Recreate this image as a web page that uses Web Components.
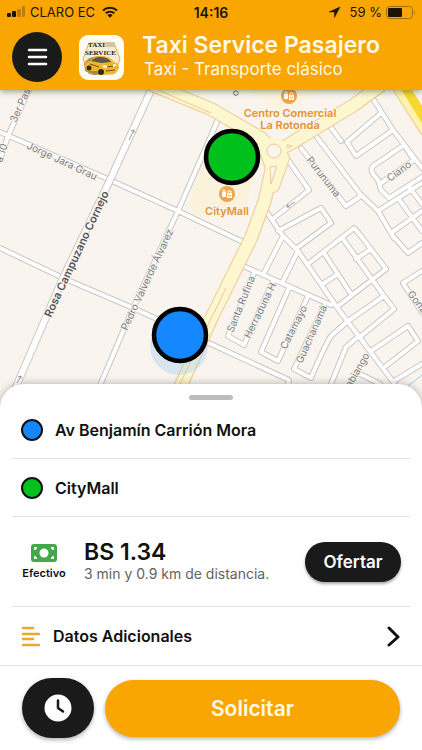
<!DOCTYPE html>
<html lang="es">
<head>
<meta charset="utf-8">
<meta name="viewport" content="width=device-width, initial-scale=1">
<title>Taxi Service Pasajero</title>
<style>
    body { margin: 0; font-family: Inter, "Liberation Sans", sans-serif; color: #111; }
</style>
</head>
<body>

<template id="app-template">
    <style>
        :host { display: flex; flex-direction: column; height: 100vh; background: #fff; --brand: #f9a602; --dark: #1a1a1a; }
        header { position: relative; z-index: 1; background: var(--brand); box-shadow: 0 2px 6px rgba(0,0,0,.35); }
        street-map { flex: 1; min-height: 200px; }
    </style>
    <header>
        <status-bar></status-bar>
        <title-bar>
            <span slot="title">Taxi Service Pasajero</span>
            <span slot="subtitle">Taxi - Transporte clásico</span>
        </title-bar>
    </header>
    <street-map></street-map>
    <trip-sheet>
        <stop-row style="--dot: #1688ff">Av Benjamín Carrión Mora</stop-row>
        <stop-row style="--dot: #00c01c">CityMall</stop-row>
        <fare-row>
            <span slot="payment">Efectivo</span>
            <span slot="price">BS 1.34</span>
            <span slot="detail">3 min y 0.9 km de distancia.</span>
            <span slot="action">Ofertar</span>
        </fare-row>
        <extra-row>Datos Adicionales</extra-row>
    </trip-sheet>
    <request-bar>Solicitar</request-bar>
</template>

<template id="status-template">
    <style>
        :host { display: grid; grid-template-columns: 1fr auto 1fr; align-items: center; height: 24px; padding: 0 6px; font-size: 13px; color: #1d1400; }
        div { display: flex; align-items: center; gap: 4px; }
        .right { justify-content: flex-end; }
        b { font-size: 14px; font-weight: 600; }
        svg { display: block; }
    </style>
    <div>
        <svg width="20" height="12" viewBox="0 0 20 12">
            <g fill="#1d1400"><rect x="1" y="7" width="4" height="4" rx="1"/><rect x="6" y="5" width="4" height="6" rx="1"/></g>
            <g fill="#bd7d05"><rect x="11" y="3" width="4" height="8" rx="1"/><rect x="16" y="0" width="3" height="11" rx="1"/></g>
        </svg>
        <span>CLARO EC</span>
        <svg width="22" height="12" viewBox="0 0 22 12" fill="none" stroke="#1d1400" stroke-width="2">
            <path d="M4 4.600a10.300 10.300 0 0 1 14 0M6.700 7.300a6.400 6.400 0 0 1 8.600 0"/>
            <path d="M11 11.800 8.500 9.300a3.600 3.600 0 0 1 5 0z" fill="#1d1400" stroke="none"/>
        </svg>
    </div>
    <b>14:16</b>
    <div class="right">
        <svg width="18" height="12" viewBox="0 0 18 12"><path d="M12 1 1 6h5.500v5.500z" fill="#1d1400" stroke="#1d1400" stroke-linejoin="round" stroke-width=".5"/></svg>
        <span>59 %</span>
        <svg width="30" height="13" viewBox="0 0 30 13">
            <rect x="0.500" y="0.500" width="26" height="12" rx="3" fill="none" stroke="#a36d06"/>
            <rect x="2" y="2" width="14" height="9" rx="1" fill="#1d1400"/>
            <path d="M28 4.500q2 2 0 4z" fill="#a36d06"/>
        </svg>
    </div>
</template>

<template id="title-template">
    <style>
        :host { display: flex; align-items: center; height: 66px; padding: 0 12px; color: #fff9e6; }
        button { display: grid; place-items: center; width: 50px; height: 50px; padding: 0; border: 0; border-radius: 50%; background: var(--dark); }
        .logo { margin: 0 18px 0 17px; border-radius: 9px; background: #fbfaf6; }
        h1, p { margin: 0; font-weight: 400; white-space: nowrap; }
        h1 { font-size: 23px; line-height: 24px; font-weight: 600; }
        p { padding-left: 2px; font-size: 17px; line-height: 24px; }
    </style>
    <button aria-label="Menú">
        <svg width="22" height="20" viewBox="0 0 22 20" stroke="#fff" stroke-width="2.500" stroke-linecap="round"><path d="M3 3h17M3 10h17M3 17h17"/></svg>
    </button>
    <svg class="logo" width="45" height="45" viewBox="0 0 45 45">
        <path d="M10 8h25l6 16-6 15H10L4 24z" fill="#f5edd2" stroke="#d8b34f"/>
        <path d="M27 7h8l2 5H26z" fill="#d7c49b"/>
        <path d="M5 29q3-7 14-8l8 1 9 6-2 10-19 2-9-4z" fill="#a58a49"/>
        <path d="M6 28q2-2 5-2 4-5 11-5 9 0 13 6 5 1 5 6l-3 5-14 2-5-4H8q-3-3-2-8z" fill="#f0b629"/>
        <path d="M12 26q4-4 9-4 8 0 11 5l-9 1z" fill="#585754"/>
        <path d="M20 22l-1 5M11 29l9 3M26 32l11-1M27 36l9-1" stroke="#71500c"/>
        <circle cx="10" cy="33" r="2.500" fill="#302b22"/><circle cx="22" cy="37" r="3" fill="#302b22"/>
        <path d="m24 31 4 1m6-1 3-1" stroke="#fff" stroke-width="2"/>
        <g font-family="Liberation Serif, serif" font-weight="700" fill="#252525">
            <text x="9" y="12" font-size="7">TAXI</text>
            <text x="6" y="20" font-size="7">SERVICE</text>
        </g>
    </svg>
    <div>
        <h1><slot name="title"></slot></h1>
        <p><slot name="subtitle"></slot></p>
    </div>
</template>

<template id="map-template">
    <style>
        :host { display: grid; grid-template-rows: minmax(0, 1fr); background: #f9f5ee; overflow: hidden; }
        svg { display: block; width: 100%; height: 100%; min-height: 0; }
        .edge, .road { fill: none; stroke-linejoin: round; stroke-linecap: round; }
        .edge { stroke: #c9c7c5; stroke-width: 6; }
        .road { stroke: #fff; stroke-width: 4; }
        .wide.edge { stroke-width: 8; }
        .wide.road { stroke-width: 6; }
        .main.edge { stroke: #f2c793; stroke-width: 14; }
        .main.road { stroke: #fdf7cf; stroke-width: 12; }
        text { font-size: 10px; fill: #7d7e85; stroke: #f9f5ee; stroke-width: 2; paint-order: stroke; stroke-linejoin: round; }
        .strong { font-size: 11px; font-weight: 600; fill: #55565c; }
        .poi { font-size: 11px; font-weight: 600; fill: #e6922e; text-anchor: middle; }
    </style>
    <svg viewBox="0 90 422 319" preserveAspectRatio="xMidYMin slice">
        <defs>
            <path id="streets" d="M0 132 110 180 178 211 243 242M30 88 8 136 0 160M221 112 211 136 178 211 133 308 98 390
                M0 248 63 278 133 308 211 344 289 380 287 390M241 265 331 305
                M368 91 393 130 422 168M381 113 347 142 356 156 393 130M329 125 341 141M316 136 361 195 378 211 394 238
                M301 148 346 206 361 196M404 145 373 166Q370 169 373 174L378 180 381 190 389 198 422 177M404 145 414 160 381 183
                M378 211 422 183M391 233 422 211M398 198 422 231M410 188 422 204
                M288 160 309 190 274 218M278 231 321 208 331 223 297 248
                M266 211 283 236 298 251 336 306 394 383 400 392M283 236 264 273M298 251 283 281
                M308 264 354 228 361 236M324 253 351 294M324 283 338 274
                M343 239 384 296 394 309 361 336M356 259 371 249M361 236 386 269 338 306M348 321 384 296
                M393 236 408 253 422 243M422 271 403 283 422 312M371 351 408 326 418 341 386 366M394 381 422 364
                M348 321 331 336Q325 345 311 378L294 369 324 306M359 336 346 347 331 384 329 390
                M254 273 228 336 244 345 273 281M289 288 261 352 278 361 308 296M356 372 380 384"/>
            <path id="avenue" d="M152 88 110 180 63 278 12 396"/>
            <path id="main" d="M150 84 211 109 261 138 274 151 288 145 354 105 380 86M264 145 272 168 265 200 251 238 211 319 178 392M283 158 273 186"/>
            <g id="mall">
                <circle r="8" fill="#efa54c"/>
                <path d="M-5-2h4v5h-4zM0-1h5v5H0z" fill="#fff"/>
                <path d="M-4-2v-2h2v2M1-1v-2h3v2" fill="none" stroke="#fff"/>
                <path d="M1 1q1.500 2 3 0" fill="none" stroke="#efa54c"/>
            </g>
        </defs>

        <path d="m207 143-19 64 12 10 44-2 14-55-28-22z" fill="#fbf2db"/>
        <path d="m245 88 80 0-42 26z" fill="#fcf4df"/>

        <use href="#streets" class="edge"/>
        <use href="#streets" class="road"/>
        <use href="#avenue" class="wide edge"/>
        <use href="#avenue" class="wide road"/>
        <use href="#main" class="main edge"/>
        <use href="#main" class="main road"/>
        <circle cx="274" cy="151" r="13" fill="#fdf7cf"/>
        <circle cx="274" cy="151" r="7" fill="#f9f5ee" stroke="#f2c793"/>
        <path d="m270 167 7-1-6 18z" fill="#f9f5ee" stroke="#f2c793"/>
        <path d="m287 145 5 1-4 2zM226 288l-19 39-27 57M158 90l53 23" fill="none" stroke="#f2c793"/>
        <path d="m397 82 31 49" stroke="#f2c793" stroke-width="16"/>
        <path d="m397 82 31 49" stroke="#fdf3ad" stroke-width="14"/>
        <path d="m402 82 27 44" stroke="#f7d730" stroke-width="9"/>
        <path d="m403 390 19-15" stroke="#8cd4e6"/>
        <path d="m129 140 5-10m-3 1 3-1v3M17 383l4-7m-3 1 3-1v3M287 207l8-5m-8 5 1-3m-1 3h3" fill="none" stroke="#9b9b9b"/>

        <text transform="translate(16 123) rotate(-66)">3er Pasaje</text>
        <text transform="translate(2 163) rotate(-72)">a 10</text>
        <text transform="translate(26 148) rotate(25)">Jorge Jara Grau</text>
        <text transform="translate(51 318) rotate(-65)" class="strong">Rosa Campuzano Cornejo</text>
        <text transform="translate(127 331) rotate(-65)">Pedro Valverde Álvarez</text>
        <text transform="translate(306 160) rotate(52)">Purunuma</text>
        <text transform="translate(390 182) rotate(-36)">Ciano</text>
        <text transform="translate(233 333) rotate(-68)">Santa Rufina</text>
        <text transform="translate(250 339) rotate(-64)">Herraduna H</text>
        <text transform="translate(286 350) rotate(-63)">Catamayo</text>
        <text transform="translate(302 364) rotate(-66)">Guachanamá</text>
        <text transform="translate(348 393) rotate(-60)">Fabiango</text>
        <text transform="translate(407 294) rotate(52)">Gonzalo</text>
        <text transform="translate(237 97) rotate(-65)">o</text>

        <use href="#mall" x="289" y="96"/>
        <use href="#mall" x="227" y="194"/>
        <text x="290" y="117" class="poi">Centro Comercial</text>
        <text x="290" y="129" class="poi">La Rotonda</text>
        <text x="227" y="215" class="poi">CityMall</text>

        <circle cx="179" cy="346" r="29" fill="#9cc9f3" opacity=".35"/>
        <g stroke="#000" stroke-width="4.500">
            <circle cx="180" cy="335" r="26" fill="#1688ff"/>
            <circle cx="232" cy="157" r="26" fill="#00c01c"/>
        </g>
    </svg>
</template>

<template id="sheet-template">
    <style>
        :host { display: block; position: relative; margin-top: -24px; padding-top: 11px; border-radius: 24px 24px 0 0; background: #fff; box-shadow: 0 0 8px rgba(0,0,0,.3); }
        .handle { width: 44px; height: 5px; margin: 0 auto; border-radius: 3px; background: #bcbcbc; }
        .rows { padding: 1px 12px 0; }
    </style>
    <div class="handle"></div>
    <div class="rows"><slot></slot></div>
</template>

<template id="stop-template">
    <style>
        :host { display: block; border-bottom: 1px solid #e2e2e2; }
        button { display: flex; align-items: center; gap: 12px; width: 100%; height: 57px; padding: 0 9px; border: 0; background: none; color: inherit; font: 600 16px/20px Inter, sans-serif; text-align: left; }
        i { box-sizing: border-box; width: 22px; height: 22px; border: 2px solid #111; border-radius: 50%; background: var(--dot); }
    </style>
    <button><i></i><span><slot></slot></span></button>
</template>

<template id="fare-template">
    <style>
        :host { display: flex; align-items: center; height: 89px; border-bottom: 1px solid #e2e2e2; }
        button { border: 0; font-family: inherit; font-weight: 600; }
        .pay { display: flex; flex-direction: column; align-items: center; gap: 4px; width: 64px; padding: 0; background: none; color: inherit; font-size: 11px; line-height: 14px; }
        .fare { flex: 1; padding-left: 8px; white-space: nowrap; }
        .price { font-size: 23px; line-height: 24px; font-weight: 600; }
        .detail { font-size: 14px; line-height: 20px; color: #636363; }
        .offer { width: 96px; height: 40px; margin-right: 9px; padding: 0; border-radius: 20px; background: var(--dark); color: #fff; font-size: 17px; box-shadow: 0 2px 3px rgba(0,0,0,.35); }
    </style>
    <button class="pay">
        <svg width="26" height="18" viewBox="0 0 26 18">
            <rect width="26" height="18" rx="3" fill="#43a948"/>
            <circle cx="13" cy="9" r="4.500" fill="#fff"/>
            <path d="M3 6V3h3q0 3-3 3zM23 6V3h-3q0 3 3 3zM3 12v3h3q0-3-3-3zM23 12v3h-3q0-3 3-3z" fill="#fff"/>
        </svg>
        <slot name="payment"></slot>
    </button>
    <div class="fare">
        <div class="price"><slot name="price"></slot></div>
        <div class="detail"><slot name="detail"></slot></div>
    </div>
    <button class="offer"><slot name="action"></slot></button>
</template>

<template id="extra-template">
    <style>
        :host { display: block; }
        button { display: flex; align-items: center; gap: 12px; width: 100%; height: 58px; padding: 0 9px; border: 0; background: none; color: inherit; font: 600 16px/20px Inter, sans-serif; text-align: left; }
        span { flex: 1; }
    </style>
    <button>
        <svg width="20" height="21" viewBox="0 0 20 21" stroke="#efa62a" stroke-width="2.500" stroke-linecap="round"><path d="M2 2h10M2 8h16M2 13h10M2 19h16"/></svg>
        <span><slot></slot></span>
        <svg width="14" height="22" viewBox="0 0 14 22" fill="none" stroke="#111" stroke-width="3" stroke-linecap="round" stroke-linejoin="round"><path d="m2 3 9 9-9 8"/></svg>
    </button>
</template>

<template id="request-template">
    <style>
        :host { display: flex; align-items: center; gap: 11px; height: 84px; padding: 0 22px; border-top: 1px solid #e2e2e2; background: #fff; position: relative; }
        button { border: 0; padding: 0; border-radius: 30px; box-shadow: 0 2px 4px rgba(0,0,0,.3); font-family: inherit; }
        .later { display: grid; place-items: center; width: 72px; height: 60px; background: var(--dark); }
        .go { flex: 1; height: 57px; background: var(--brand); color: #fff9e6; font-size: 21px; font-weight: 600; }
    </style>
    <button class="later" aria-label="Programar">
        <svg width="28" height="28" viewBox="0 0 28 28"><circle cx="14" cy="14" r="13.500" fill="#fff"/><path d="M14 6.500V14l5 3.500" fill="none" stroke="#1a1a1a" stroke-width="2.500" stroke-linecap="round" stroke-linejoin="round"/></svg>
    </button>
    <button class="go"><slot></slot></button>
</template>

<taxi-app></taxi-app>

<script>
    function define(name, templateId) {
        const template = document.getElementById(templateId);
        customElements.define(name, class extends HTMLElement {
            constructor() {
                super();
                this.attachShadow({ mode: 'open' })
                    .appendChild(template.content.cloneNode(true));
            }
        });
    }

    define('status-bar', 'status-template');
    define('title-bar', 'title-template');
    define('street-map', 'map-template');
    define('trip-sheet', 'sheet-template');
    define('stop-row', 'stop-template');
    define('fare-row', 'fare-template');
    define('extra-row', 'extra-template');
    define('request-bar', 'request-template');
    define('taxi-app', 'app-template');
</script>
</body>
</html>
